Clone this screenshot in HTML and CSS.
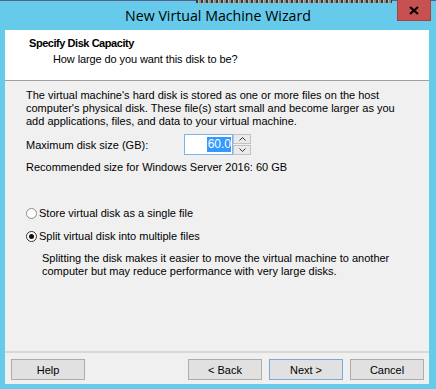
FILE: index.html
```html
<!DOCTYPE html>
<html>
<head>
<meta charset="utf-8">
<link rel="stylesheet" href="styles.css">
</head>
<body>
<div class="window">
  <div class="titlebar">
    <div class="behind"></div>
    <div class="title">New Virtual Machine Wizard</div>
    <div class="close">
      <svg width="10" height="9" viewBox="0 0 10 9"><path d="M1 1 L9 8 M9 1 L1 8" stroke="#000" stroke-width="2.2" fill="none"/></svg>
    </div>
  </div>
  <div class="content">
    <div class="header">
      <div class="h-title">Specify Disk Capacity</div>
      <div class="h-sub">How large do you want this disk to be?</div>
    </div>
    <div class="body">
      <p class="intro">The virtual machine's hard disk is stored as one or more files on the host computer's physical disk. These file(s) start small and become larger as you add applications, files, and data to your virtual machine.</p>
      <div class="size-row">
        <span class="label">Maximum disk size (GB):</span>
        <div class="spin">
          <div class="field"><span class="sel">60.0</span></div>
          <div class="arrows">
            <div class="arr"><svg width="7" height="4" viewBox="0 0 7 4"><path d="M0.5 3.5 L3.5 0.5 L6.5 3.5" stroke="#333" stroke-width="1" fill="none"/></svg></div>
            <div class="arr"><svg width="7" height="4" viewBox="0 0 7 4"><path d="M0.5 0.5 L3.5 3.5 L6.5 0.5" stroke="#333" stroke-width="1" fill="none"/></svg></div>
          </div>
        </div>
      </div>
      <p class="rec">Recommended size for Windows Server 2016: 60 GB</p>
      <div class="radio r1"><span class="dot"></span>Store virtual disk as a single file</div>
      <div class="radio r2"><span class="dot on"></span>Split virtual disk into multiple files</div>
      <p class="desc">Splitting the disk makes it easier to move the virtual machine to another computer but may reduce performance with very large disks.</p>
    </div>
    <div class="sep"></div>
    <div class="buttons">
      <button class="btn">Help</button>
      <div class="spacer"></div>
      <button class="btn">&lt; Back</button>
      <button class="btn default">Next &gt;</button>
      <button class="btn">Cancel</button>
    </div>
  </div>
</div>
</body>
</html>
```
FILE: styles.css
```css
* { box-sizing: border-box; }
html, body { margin: 0; padding: 0; }
body {
  width: 436px;
  height: 389px;
  overflow: hidden;
  font-family: "Liberation Sans", Arial, sans-serif;
  font-size: 11px;
  color: #000;
}
.window {
  width: 436px;
  height: 389px;
  background: #66cbea;
  display: flex;
  flex-direction: column;
}
.titlebar {
  position: relative;
  height: 30px;
  border-top: 1px solid #5a5e8a;
  display: flex;
  align-items: center;
  justify-content: center;
  flex-shrink: 0;
}
.behind {
  position: absolute;
  left: 196px;
  top: -1px;
  width: 196px;
  height: 3px;
  background: repeating-linear-gradient(90deg, #3a3a3a 0 2px, #c9b58a 2px 3px, #8c8c8c 3px 5px);
}
.title {
  font-family: "Open Sans", "Noto Sans", sans-serif;
  font-size: 14.2px;
  color: #000;
  margin-top: -1px;
}
.close {
  position: absolute;
  right: 5px;
  top: -1px;
  width: 34px;
  height: 21px;
  background: #c75050;
  border: 1px solid #a8403f;
  border-top: none;
  display: flex;
  align-items: center;
  justify-content: center;
}
.content {
  margin-left: 5px;
  width: 424px;
  height: 354px;
  background: #f0f0f0;
  display: flex;
  flex-direction: column;
}
.header {
  height: 51px;
  background: #fff;
  border-bottom: 1px solid #a0a0a0;
  padding: 7px 0 0 24px;
  flex-shrink: 0;
}
.h-title { font-weight: bold; line-height: 13px; letter-spacing: -0.45px; }
.h-sub { line-height: 13px; margin-top: 3px; padding-left: 24px; letter-spacing: -0.1px; }
.body {
  flex: 1;
  padding: 8px 20px 0 21px;
}
p { margin: 0; }
.intro { line-height: 13px; }
.size-row {
  display: flex;
  align-items: center;
  margin-top: 6px;
  height: 21px;
}
.label { width: 158px; }
.spin { display: flex; height: 21px; }
.field {
  width: 49px;
  height: 21px;
  background: #fff;
  border: 1px solid #7eb4ea;
  display: flex;
  align-items: center;
  justify-content: flex-end;
  padding-right: 1px;
}
.sel {
  background: #3399ff;
  color: #fff;
  font-size: 12px;
  line-height: 15px;
  padding: 0 0 0 1px;
}
.arrows {
  width: 18px;
  display: flex;
  flex-direction: column;
  gap: 1px;
}
.arr {
  height: 10px;
  background: #eaeaea;
  border: 1px solid #c2c2c2;
  display: flex;
  align-items: center;
  justify-content: center;
}
.rec { line-height: 13px; margin-top: 6px; }
.radio {
  display: flex;
  align-items: center;
  height: 13px;
  line-height: 13px;
}
.r1 { margin-top: 33px; }
.r2 { margin-top: 10px; }
.dot {
  width: 11px;
  height: 11px;
  border-radius: 50%;
  border: 1px solid #8d8d8d;
  background: #fff;
  margin-right: 2px;
  display: flex;
  align-items: center;
  justify-content: center;
}
.dot.on { border-color: #333; }
.dot.on::after {
  content: "";
  width: 5px;
  height: 5px;
  border-radius: 50%;
  background: #111;
}
.desc { line-height: 13px; margin-top: 9px; padding-left: 16px; }
.sep {
  height: 2px;
  background: #d8d8d8;
  flex-shrink: 0;
}
.buttons {
  display: flex;
  gap: 7px;
  padding: 6px 5px 4px 6px;
  flex-shrink: 0;
}
.spacer { flex: 1; }
.btn {
  width: 74px;
  height: 21px;
  background: #e1e1e1;
  border: 1px solid #adadad;
  font-family: "Liberation Sans", Arial, sans-serif;
  font-size: 11px;
  color: #000;
  padding: 0;
}
.btn.default { border-color: #7aaad6; }
```
